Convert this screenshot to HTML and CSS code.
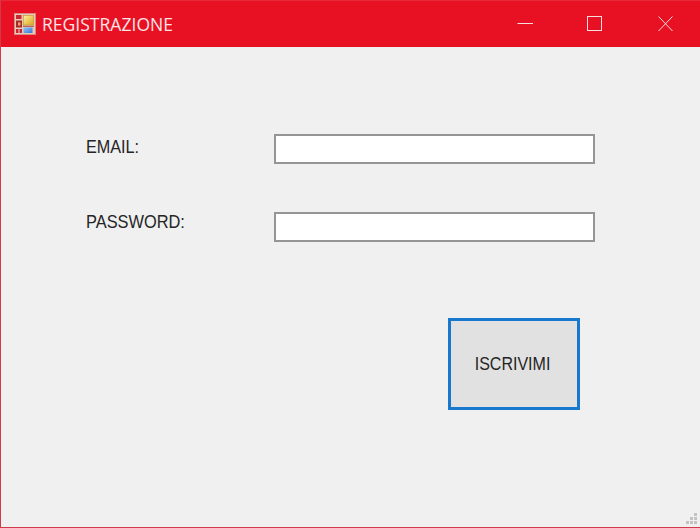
FILE: index.html
```html
<!DOCTYPE html>
<html lang="it">
<head>
<meta charset="utf-8">
<title>REGISTRAZIONE</title>
<link rel="stylesheet" href="styles.css">
</head>
<body>
<div class="window">
  <header class="titlebar">
    <svg class="app-icon" width="22" height="22" viewBox="0 0 22 22">
      <defs>
        <linearGradient id="gold" x2="1" y2="1"><stop stop-color="#fff0a0"/><stop offset="1" stop-color="#d8a51c"/></linearGradient>
        <linearGradient id="blue" x2="1" y2="1"><stop stop-color="#8cc8ff"/><stop offset="1" stop-color="#3777d0"/></linearGradient>
      </defs>
      <rect x=".5" y=".5" width="21" height="21" fill="#e9c9b9" stroke="#d98a7c"/>
      <rect x="2" y="2" width="5.5" height="4" fill="#c92735"/>
      <rect x="2" y="7.5" width="6" height="7" fill="#a52d26"/>
      <rect x="4" y="9.5" width="2.5" height="3" fill="#e8a17b"/>
      <rect x="2" y="16" width="2.5" height="4" fill="#c92735"/>
      <rect x="5.5" y="16" width="2.5" height="4" fill="#c92735"/>
      <rect x="9.5" y="2.5" width="10" height="9.5" fill="url(#gold)" stroke="#c99a31" stroke-width=".7"/>
      <rect x="9.5" y="14.5" width="9" height="5.5" fill="url(#blue)"/>
      <path d="M9 13.3H20" stroke="#ae4a3c"/>
    </svg>
    <h1 class="title"><span class="title-text">REGISTRAZIONE</span></h1>
    <div class="controls">
      <svg width="70" height="46" viewBox="0 0 70 46"><path d="M17.5 22.5H33"/></svg>
      <svg width="70" height="46" viewBox="0 0 70 46"><rect x="17.500" y="15.500" width="14" height="14"/></svg>
      <svg width="70" height="46" viewBox="0 0 70 46"><path d="M18.5 15.5L32.5 30M32.5 15.5L18.5 30"/></svg>
    </div>
  </header>
  <form class="form">
    <label class="label" for="email"><span class="email-text">EMAIL:</span></label>
    <input class="field" id="email" type="text">
    <label class="label" for="password"><span class="password-text">PASSWORD:</span></label>
    <input class="field" id="password" type="password">
    <button class="submit" type="button"><span class="submit-text">ISCRIVIMI</span></button>
  </form>
  <svg class="grip" width="14" height="14" viewBox="0 0 14 14"><path d="M9 1h3v3H9zM5 5h3v3H5zM9 5h3v3H9zM1 9h3v3H1zM5 9h3v3H5zM9 9h3v3H9z"/></svg>
</div>
</body>
</html>
```

FILE: styles.css
```css
* { box-sizing: border-box; }
body { margin: 0; }
.window {
  position: relative;
  width: 700px;
  height: 528px;
  background: #f0f0f0;
  border: 1px solid #d23a4c;
  border-top-color: #e8293a;
  border-right: 0;
  overflow: hidden;
}
.titlebar {
  display: flex;
  align-items: center;
  height: 46px;
  padding-left: 13px;
  background: #e81123;
}
.app-icon { flex: none; }
.title {
  flex: 1;
  margin: -1px 0 0 6px;
  font: 400 18px/24px "Open Sans", sans-serif;
  color: #fce4e6;
}
.title-text, .email-text, .password-text, .submit-text {
  display: inline-block;
  transform-origin: left center;
}
.title-text { transform: scaleX(.975); }
.controls { display: flex; margin-right: -10px; }
.controls svg { fill: none; stroke: #fbdde0; stroke-width: 1; }
.form {
  display: grid;
  grid-template-columns: 188px 321px;
  grid-template-rows: 30px 30px 121px;
  row-gap: 48px;
  padding: 87px 0 0 85px;
  font-family: "Liberation Sans", sans-serif;
  font-size: 18px;
  color: #252525;
}
.label { line-height: 26px; }
.label:nth-of-type(2) { line-height: 20px; }
.email-text { transform: scaleX(.9); }
.password-text { transform: scaleX(.91); }
.field {
  width: 321px;
  height: 30px;
  padding: 0 5px;
  background: #fff;
  border: 2px solid #959595;
  border-radius: 0;
  outline: 0;
}
.submit {
  grid-column: 2;
  width: 132px;
  height: 92px;
  margin: 28px 0 0 174px;
  padding: 0;
  border: 3px solid #1778cd;
  background: #e1e1e1;
  font: inherit;
  color: inherit;
}
.submit-text { margin-left: -2px; transform-origin: center; transform: scaleX(.89); }
.grip {
  position: absolute;
  right: 1px;
  bottom: 1px;
  fill: #c3c3c3;
}
```
